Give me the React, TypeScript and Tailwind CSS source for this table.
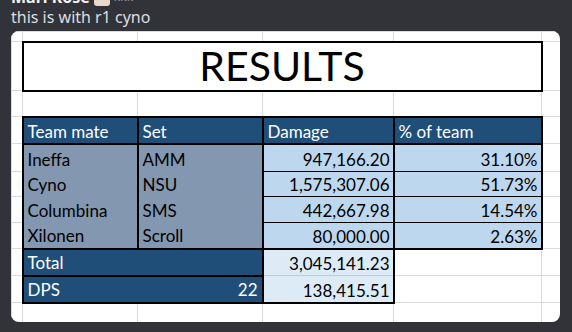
const grid = 'border border-[#dadada] p-0'
const head = 'border-2 border-black bg-[#1f4e79] text-white px-[4px] align-bottom pb-[1px]'

const rows = [
  { name: 'Ineffa', set: 'AMM', dmg: '947,166.20', pct: '31.10%', h: 'h-[28px]' },
  { name: 'Cyno', set: 'NSU', dmg: '1,575,307.06', pct: '51.73%', h: 'h-[25px]' },
  { name: 'Columbina', set: 'SMS', dmg: '442,667.98', pct: '14.54%', h: 'h-[26px]' },
  { name: 'Xilonen', set: 'Scroll', dmg: '80,000.00', pct: '2.63%', h: 'h-[26px]' },
]

export default function App() {
  return (
    <div className="w-[572px] h-[332px] overflow-hidden bg-[#313338] font-['Noto_Sans',sans-serif]">
      <div className="h-[7px] overflow-hidden pl-[11px]">
        <div className="-mt-[13px] flex items-center gap-[4px]">
          <span className="text-[16px] font-bold leading-[20px] text-[#f2f3f5]">Mari Rose</span>
          <span className="h-[18px] w-[16px] rounded-[3px] bg-[#e8d9cc]" />
          <span className="text-[12px] text-[#949ba4]">kkk</span>
        </div>
      </div>
      <p className="pl-[11px] text-[16px] leading-[20px] text-[#dbdee1]">this is with r1 cyno</p>

      <div className="ml-[11px] mt-[4px] h-[291px] w-[549px] overflow-hidden rounded-[8px] bg-white">
        <table className="w-[549px] table-fixed border-collapse font-['Lato',sans-serif] text-[17px] leading-[20px] text-black">
          <colgroup>
            <col className="w-[11px]" />
            <col className="w-[115px]" />
            <col className="w-[125px]" />
            <col className="w-[131px]" />
            <col className="w-[148px]" />
            <col className="w-[19px]" />
          </colgroup>
          <tbody>
            <tr className="h-[10px]">
              {[0, 1, 2, 3, 4, 5].map((i) => (
                <td key={i} className={grid} />
              ))}
            </tr>
            <tr className="h-[49px]">
              <td className={grid} />
              <td colSpan={4} className="border-2 border-black p-0 text-center align-middle text-[41px] leading-[44px]">
                RESULTS
              </td>
              <td className={grid} />
            </tr>
            <tr className="h-[26px]">
              {[0, 1, 2, 3, 4, 5].map((i) => (
                <td key={i} className={grid} />
              ))}
            </tr>
            <tr className="h-[27px]">
              <td className={grid} />
              <td className={head}>Team mate</td>
              <td className={head}>Set</td>
              <td className={head}>Damage</td>
              <td className={head}>% of team</td>
              <td className={grid} />
            </tr>
            {rows.map((r, i) => {
              const last = i === rows.length - 1
              return (
                <tr key={r.name} className={r.h}>
                  <td className={grid} />
                  <td
                    className={
                      'border-x-2 border-black bg-[#8497b0] px-[4px] pb-[2px] align-bottom ' +
                      (last ? 'border-t-0 border-b-2' : 'border-y-0')
                    }
                  >
                    {r.name}
                  </td>
                  <td
                    className={
                      'border-x-2 border-black bg-[#8497b0] px-[4px] pb-[2px] align-bottom ' +
                      (last ? 'border-t-0 border-b-2' : 'border-y-0')
                    }
                  >
                    {r.set}
                  </td>
                  <td
                    className={
                      'border-x-2 border-black bg-[#bdd7ee] pr-[3px] pb-[1px] text-right align-bottom ' +
                      (last ? 'border-t border-b-2' : 'border-y')
                    }
                  >
                    {r.dmg}
                  </td>
                  <td
                    className={
                      'border-x-2 border-black bg-[#bdd7ee] pr-[3px] pb-[1px] text-right align-bottom ' +
                      (last ? 'border-t border-b-2' : 'border-y')
                    }
                  >
                    {r.pct}
                  </td>
                  <td className={grid} />
                </tr>
              )
            })}
            <tr className="h-[27px]">
              <td className={grid} />
              <td colSpan={2} className={head + ' pb-[2px]'}>
                Total
              </td>
              <td className="border-x-2 border-t-2 border-b border-black border-b-[#c8c8c8] bg-[#ddebf7] pr-[3px] pb-[1px] text-right align-bottom">
                3,045,141.23
              </td>
              <td className={grid} />
              <td className={grid} />
            </tr>
            <tr className="h-[27px]">
              <td className={grid} />
              <td colSpan={2} className={head + ' pb-[2px]'}>
                <div className="flex justify-between">
                  <span>DPS</span>
                  <span>22</span>
                </div>
              </td>
              <td className="border-x-2 border-b-2 border-t border-black border-t-[#c8c8c8] bg-[#ddebf7] pr-[3px] pb-[1px] text-right align-bottom">
                138,415.51
              </td>
              <td className={grid} />
              <td className={grid} />
            </tr>
            <tr className="h-[24px]">
              {[0, 1, 2, 3, 4, 5].map((i) => (
                <td key={i} className={grid} />
              ))}
            </tr>
          </tbody>
        </table>
      </div>
    </div>
  )
}
